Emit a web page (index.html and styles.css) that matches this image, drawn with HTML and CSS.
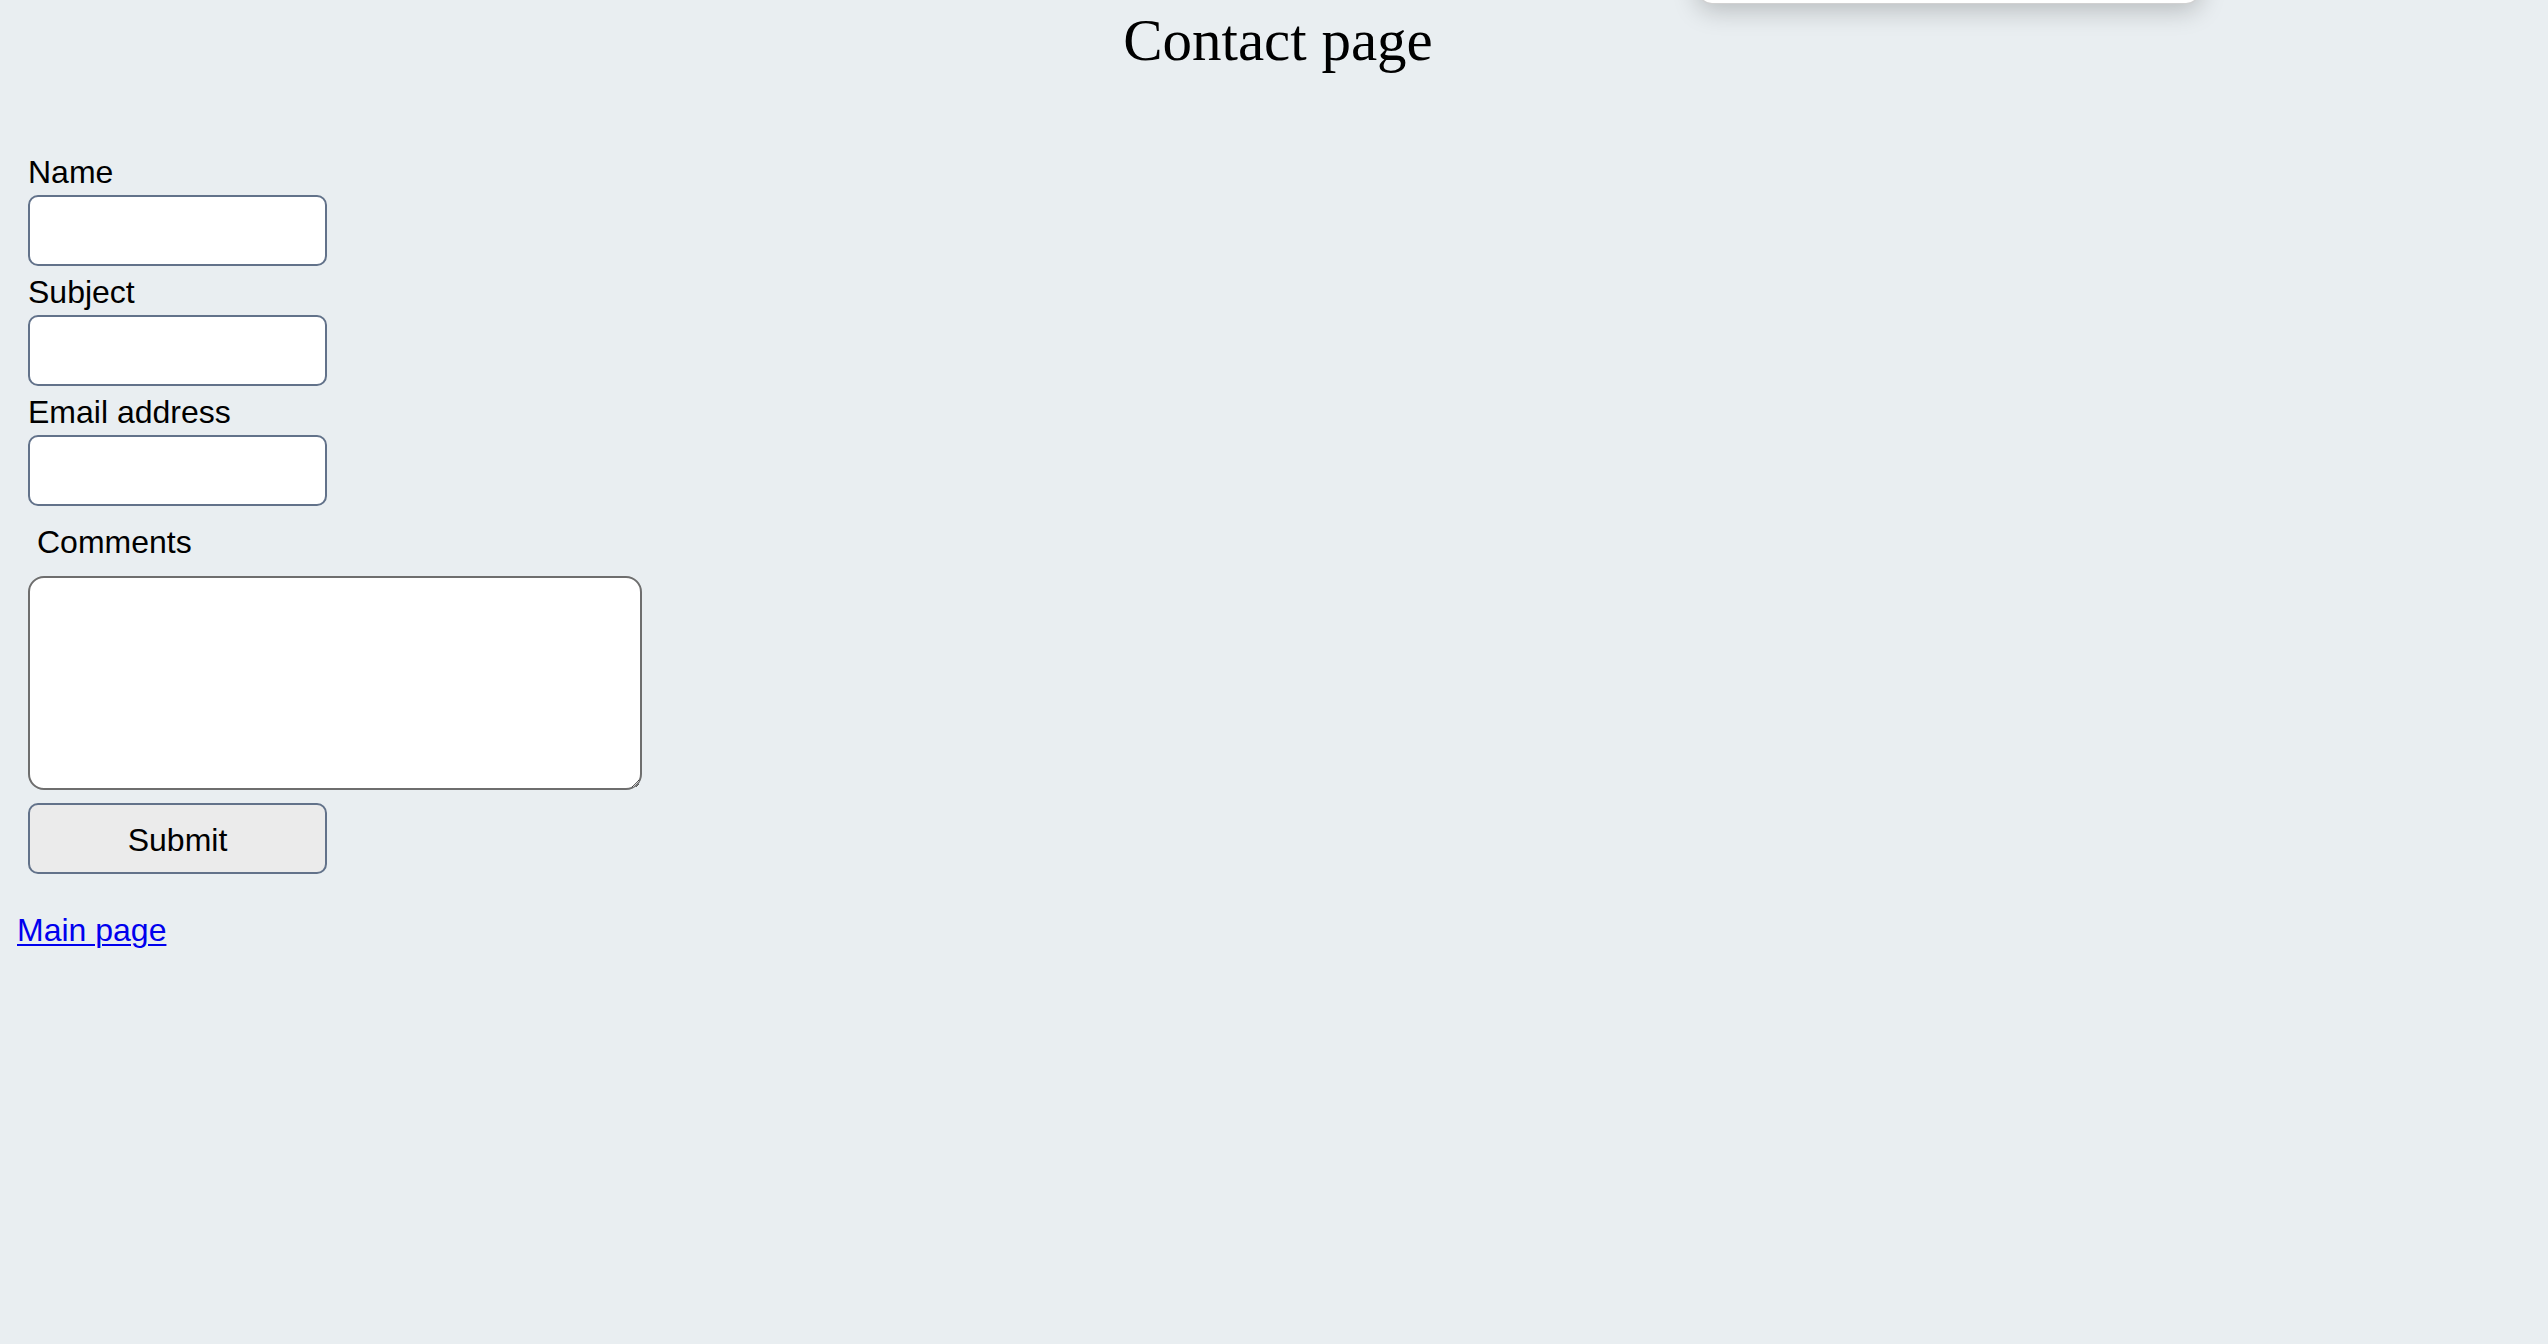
FILE: index.html
```html
<!DOCTYPE html>
<html lang="en">
<head>
<meta charset="utf-8">
<title>Contact page</title>
<link rel="stylesheet" href="styles.css">
</head>
<body>
<h1 class="title">Contact page</h1>
<form class="contact">
  <label class="field-label" for="name">Name</label>
  <input class="field" id="name" type="text">
  <label class="field-label" for="subject">Subject</label>
  <input class="field" id="subject" type="text">
  <label class="field-label" for="email">Email address</label>
  <input class="field" id="email" type="email">
  <label class="field-label comments-label" for="comments">Comments</label>
  <textarea class="comments" id="comments"></textarea>
  <button class="submit" type="submit">Submit</button>
</form>
<div class="back-row"><a class="back" href="#">Main page</a></div>
<div class="popup"></div>
</body>
</html>
```
FILE: styles.css
```css
html, body {
  margin: 0;
  padding: 0;
}
body {
  background: #e9eef1;
  color: #000;
  font-family: "Liberation Sans", Arial, sans-serif;
  font-size: 32px;
  height: 1344px;
  overflow: hidden;
  position: relative;
}
.title {
  margin: 0;
  padding-top: 5px;
  padding-left: 8px;
  font-family: "Liberation Serif", "Times New Roman", serif;
  font-weight: normal;
  font-size: 59px;
  line-height: 70px;
  text-align: center;
  color: #000;
}
.contact {
  display: flex;
  flex-direction: column;
  align-items: flex-start;
  padding: 79px 0 0 28px;
  margin: 0;
}
.field-label {
  display: block;
  line-height: 36px;
  height: 36px;
  margin-bottom: 5px;
}
.field {
  box-sizing: border-box;
  width: 299px;
  height: 71px;
  margin: 0 0 8px 0;
  border: 2px solid #62728a;
  border-radius: 10px;
  background: #fff;
  font-family: inherit;
  font-size: 32px;
  padding: 0 10px;
  outline: none;
}
.comments-label {
  margin-top: 10px;
  margin-left: 9px;
  margin-bottom: 16px;
}
.comments {
  box-sizing: border-box;
  width: 614px;
  height: 214px;
  margin: 0;
  border: 2px solid #6e6e6e;
  border-radius: 16px;
  background: #fff;
  font-family: inherit;
  font-size: 32px;
  padding: 8px;
  outline: none;
}
.submit {
  box-sizing: border-box;
  width: 299px;
  height: 71px;
  margin-top: 13px;
  border: 2px solid #62728a;
  border-radius: 10px;
  background: #ebebeb;
  color: #000;
  font-family: inherit;
  font-size: 32px;
  line-height: 36px;
  padding: 2px 0 0 0;
}
.back-row {
  padding-left: 17px;
  margin-top: 38px;
  line-height: 36px;
}
.back {
  color: #0000ee;
  text-decoration: underline;
  text-underline-offset: 3px;
  text-decoration-thickness: 2px;
}
.popup {
  position: absolute;
  left: 1698px;
  top: -100px;
  width: 500px;
  height: 102px;
  background: #fff;
  border-radius: 14px;
  border: 1px solid rgba(0, 0, 0, 0.18);
  box-shadow: 0 6px 26px rgba(0, 0, 0, 0.22);
}
```
